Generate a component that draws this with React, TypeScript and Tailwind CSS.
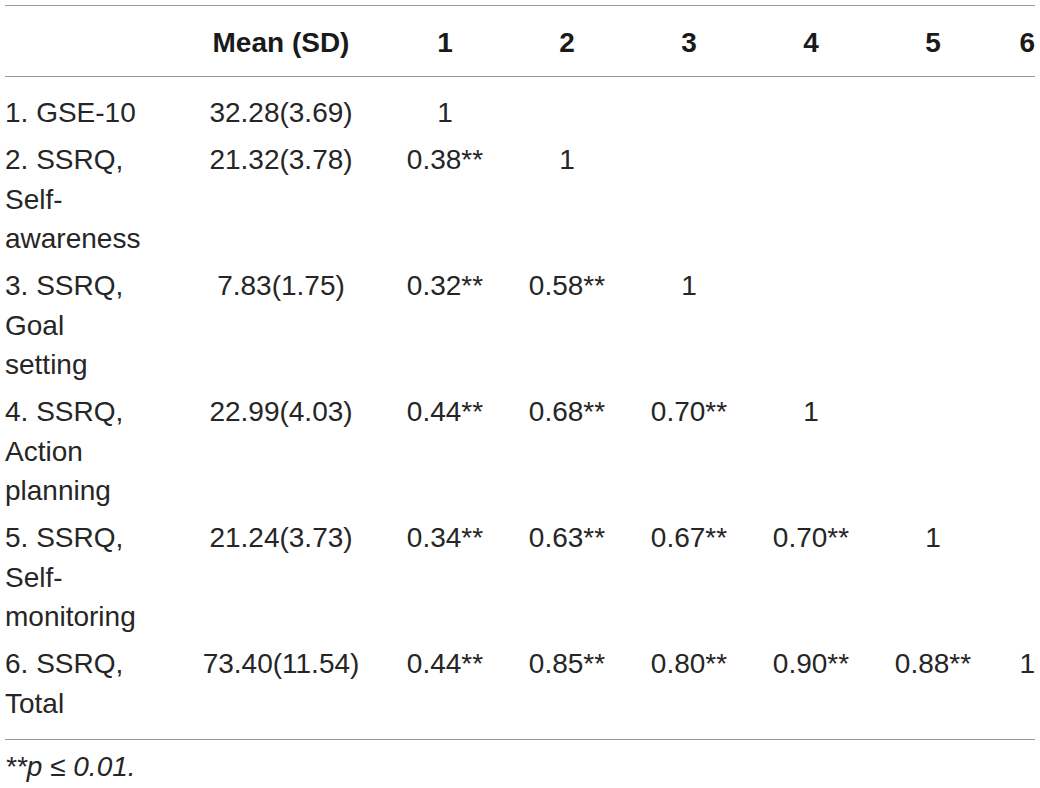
const ROWS = [
  { label: '1. GSE-10', mean: '32.28(3.69)', r: ['1', '', '', '', '', ''] },
  { label: '2. SSRQ, Self-awareness', mean: '21.32(3.78)', r: ['0.38**', '1', '', '', '', ''] },
  { label: '3. SSRQ, Goal setting', mean: '7.83(1.75)', r: ['0.32**', '0.58**', '1', '', '', ''] },
  { label: '4. SSRQ, Action planning', mean: '22.99(4.03)', r: ['0.44**', '0.68**', '0.70**', '1', '', ''] },
  { label: '5. SSRQ, Self-monitoring', mean: '21.24(3.73)', r: ['0.34**', '0.63**', '0.67**', '0.70**', '1', ''] },
  { label: '6. SSRQ, Total', mean: '73.40(11.54)', r: ['0.44**', '0.85**', '0.80**', '0.90**', '0.88**', '1'] },
];

const COLS = 'grid grid-cols-[173px_206px_122px_122px_122px_122px_122px_1fr]';

export default function App() {
  return (
    <div className="bg-white w-[1040px] h-[788px] overflow-hidden">
      <div className="ml-[5px] pt-[5px] w-[1030px] font-['Liberation_Sans',Arial,sans-serif] text-[28px] leading-[39.5px] text-[#262626]">
        {/* header */}
        <div className={`${COLS} border-t border-b border-[#9b9b9b] pt-[16.75px] pb-[13.75px] font-bold text-[#1a1a1a]`}>
          <div />
          <div className="text-center">Mean (SD)</div>
          {['1', '2', '3', '4', '5'].map((h) => (
            <div key={h} className="text-center">{h}</div>
          ))}
          <div className="text-right">6</div>
        </div>

        {/* body */}
        <div className="border-b border-[#9b9b9b] pt-[12.5px] pb-[11.5px]">
          {ROWS.map((row) => (
            <div key={row.label} className={`${COLS} py-[3.75px]`}>
              <div className="pr-[31px]">{row.label}</div>
              <div className="text-center">{row.mean}</div>
              {row.r.slice(0, 5).map((v, i) => (
                <div key={i} className="text-center">{v}</div>
              ))}
              <div className="text-right">{row.r[5]}</div>
            </div>
          ))}
        </div>

        <p className="pt-[7.25px] italic">**p ≤ 0.01.</p>
      </div>
    </div>
  );
}
